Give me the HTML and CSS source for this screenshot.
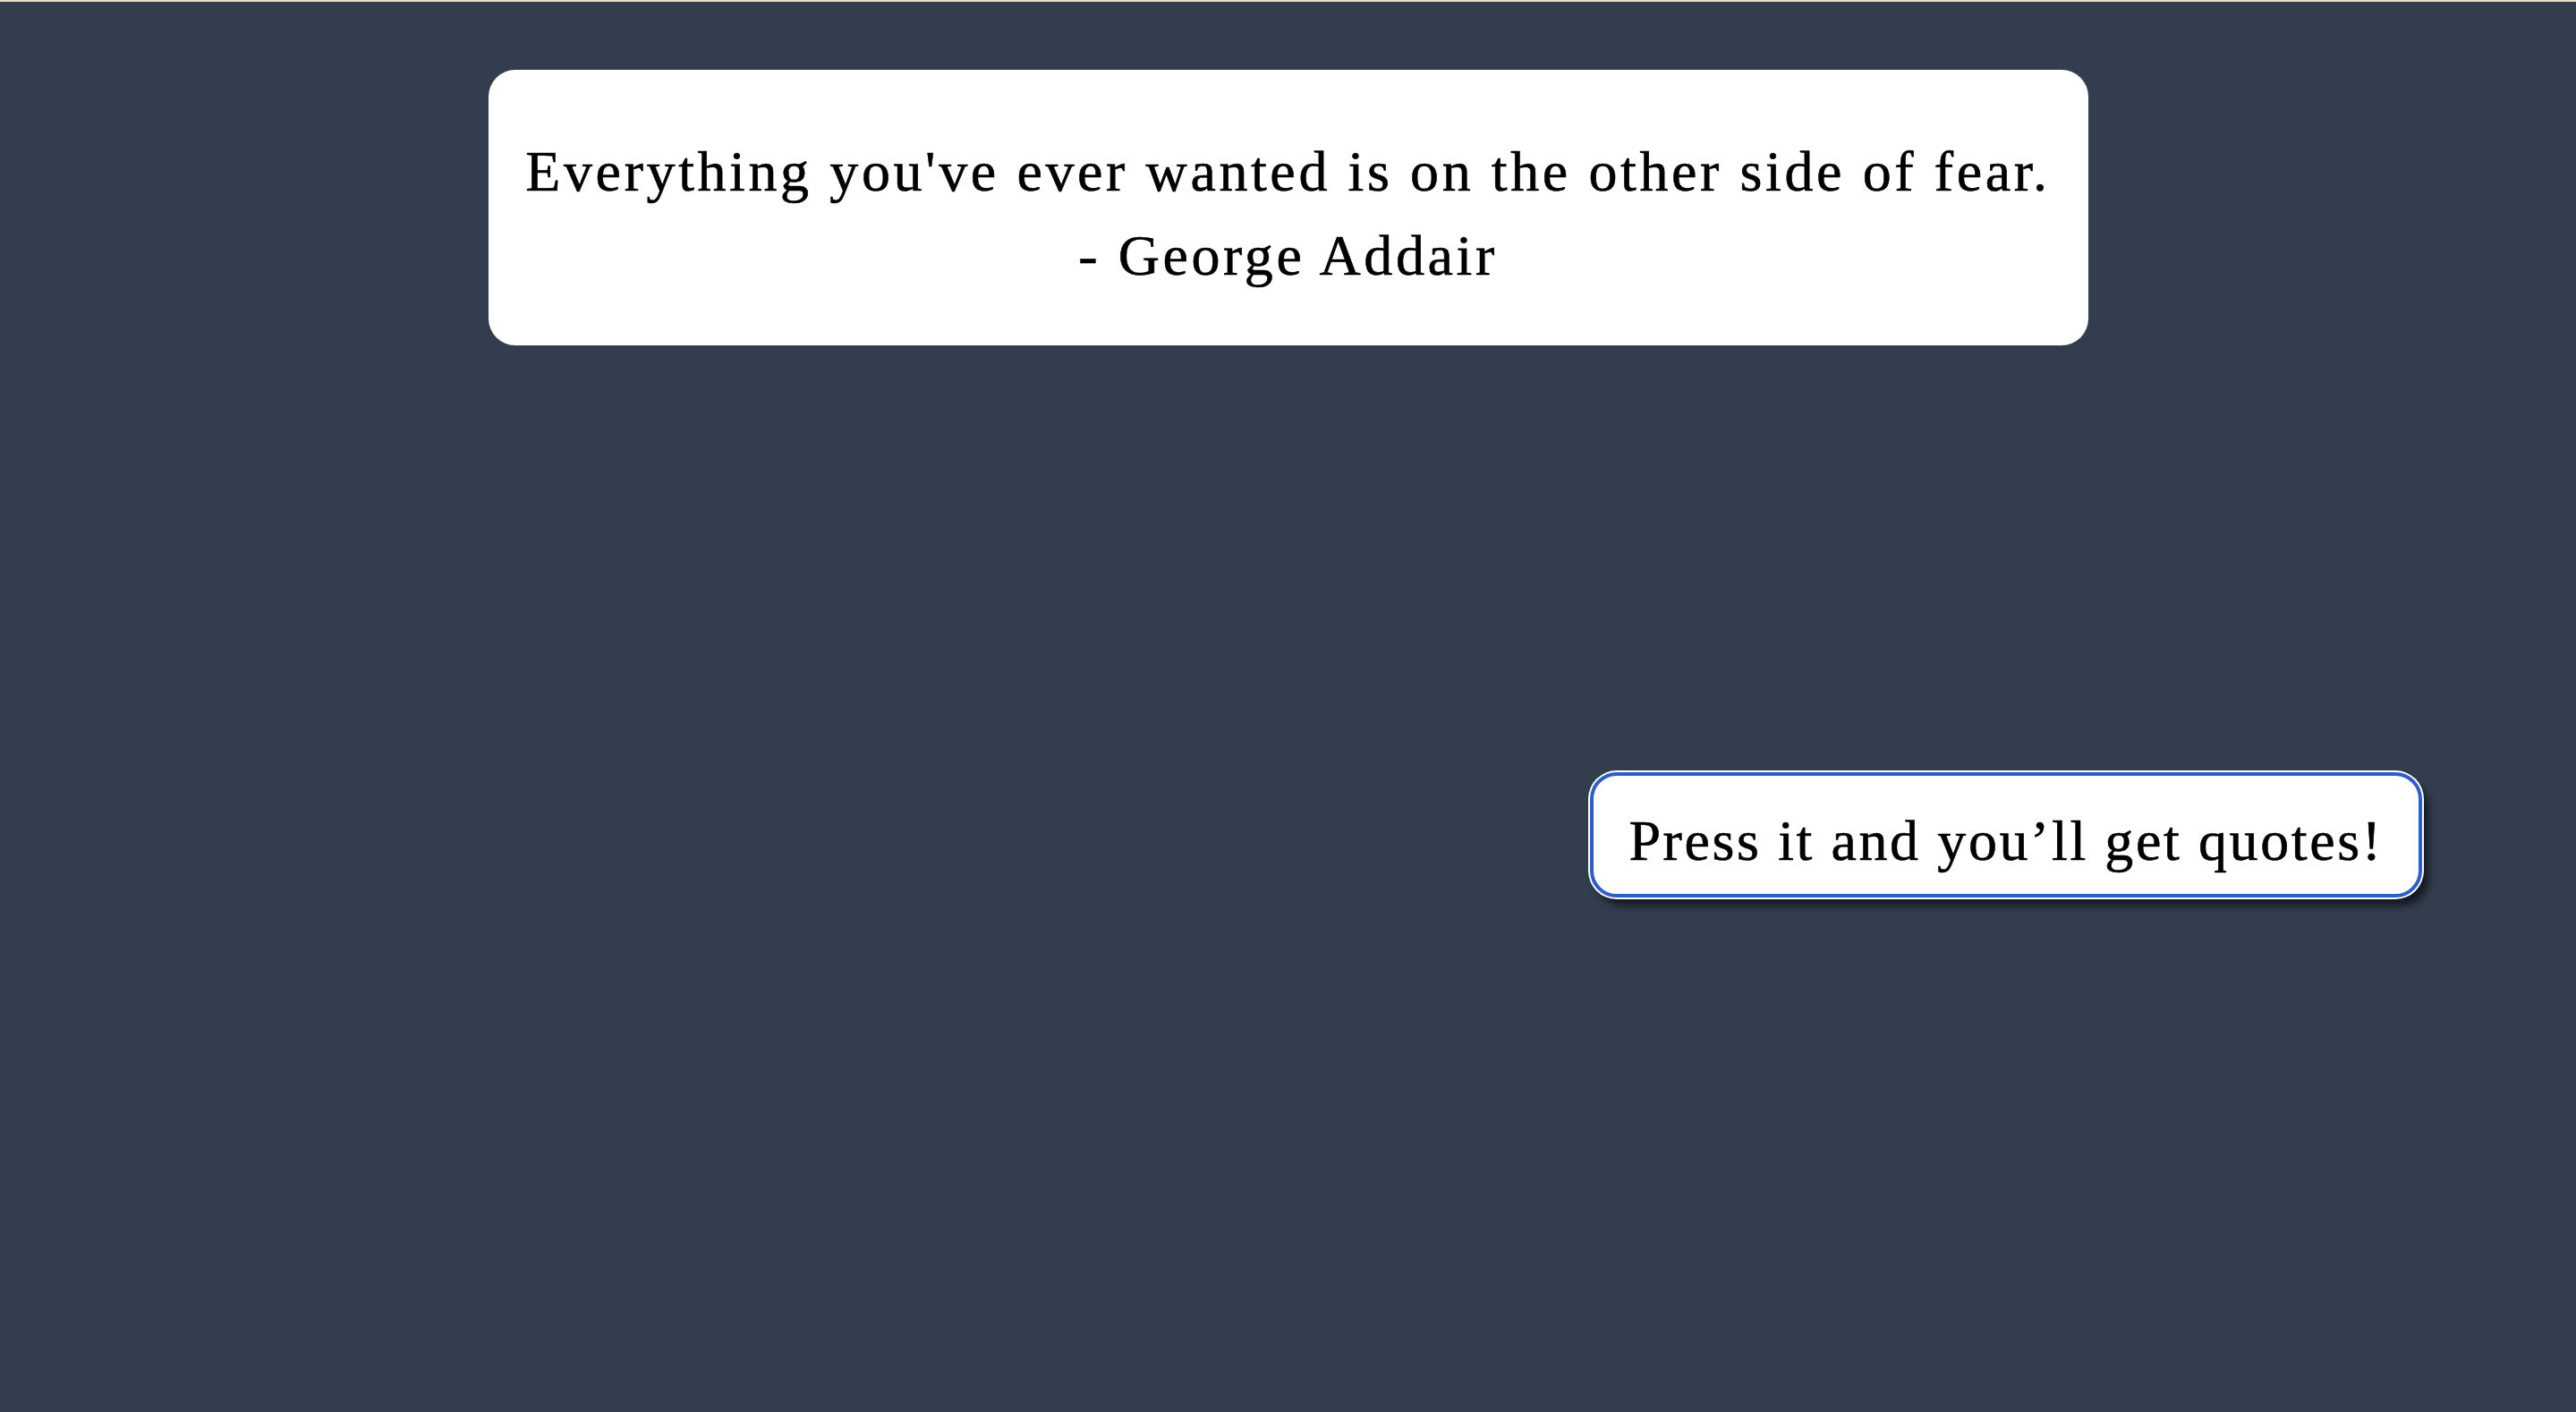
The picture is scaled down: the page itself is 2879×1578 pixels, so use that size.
FILE: index.html
```html
<!DOCTYPE html>
<html lang="en">
<head>
<meta charset="utf-8">
<title>Quotes</title>
<link rel="stylesheet" href="styles.css">
</head>
<body>
<div class="page">
  <section class="quote-card">
    <p class="quote-text">Everything you've ever wanted is on the other side of fear.</p>
    <p class="quote-author">- George Addair</p>
  </section>
  <div class="actions">
    <button class="quote-btn" type="button">Press it and you’ll get quotes!</button>
  </div>
</div>
</body>
</html>
```

FILE: styles.css
```css
html, body {
  margin: 0;
  padding: 0;
}
body {
  background: #323d4e;
  border-top: 2px solid #e8dec4;
  min-height: 1576px;
  font-family: "Liberation Serif", "DejaVu Serif", serif;
  color: #000;
}
.page {
  display: flex;
  flex-direction: column;
  align-items: center;
  padding-top: 76px;
}
.quote-card {
  width: 1788px;
  height: 308px;
  box-sizing: border-box;
  padding-top: 13px;
  background: #fff;
  border-radius: 30px;
  display: flex;
  flex-direction: column;
  justify-content: center;
  align-items: center;
  text-align: center;
}
.quote-text, .quote-author {
  margin: 0;
  font-size: 64px;
  line-height: 94px;
  letter-spacing: 3.6px;
  -webkit-text-stroke: 0.6px #000;
}
.actions {
  align-self: stretch;
  display: flex;
  justify-content: flex-end;
  padding-right: 172px;
  margin-top: 477px;
}
.quote-btn {
  width: 930px;
  height: 140px;
  box-sizing: border-box;
  padding: 14px 0 0;
  background: #fff;
  border: 4px solid #2b5fc7;
  border-radius: 30px;
  box-shadow: 0 0 0 2px #fff, 7px 9px 10px rgba(0, 0, 0, 0.6);
  font-family: "Liberation Serif", "DejaVu Serif", serif;
  font-size: 64px;
  letter-spacing: 2.6px;
  -webkit-text-stroke: 0.6px #000;
  color: #000;
  cursor: pointer;
}
```
